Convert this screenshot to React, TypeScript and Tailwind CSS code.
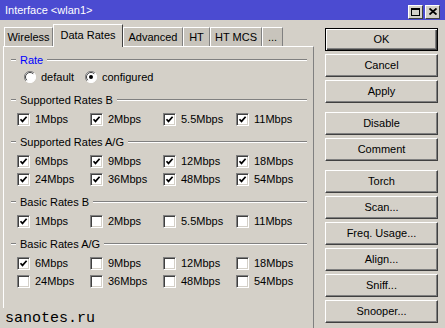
import React from "react";

const font = { fontFamily: '"Liberation Sans", Arial, sans-serif' };

function Check({ on }: { on: boolean }) {
  return (
    <div className="w-[13px] h-[13px] bg-white border border-t-[#808080] border-l-[#808080] border-r-white border-b-white shadow-[inset_1px_1px_0_#404040,inset_-1px_-1px_0_#d4d0c8] flex items-center justify-center">
      {on && (
        <svg width="9" height="9" viewBox="0 0 9 9">
          <path d="M1.5 4.2 L3.5 6.4 L7.6 1.8" fill="none" stroke="#000" strokeWidth="1.7" />
        </svg>
      )}
    </div>
  );
}

function Radio({ on }: { on: boolean }) {
  return (
    <svg width="12" height="12" viewBox="0 0 12 12">
      <circle cx="6" cy="6" r="5.5" fill="#fff" />
      <path d="M10 2 A5.5 5.5 0 0 0 2 10" fill="none" stroke="#808080" strokeWidth="1" />
      <path d="M9.2 2.8 A4.5 4.5 0 0 0 2.8 9.2" fill="none" stroke="#404040" strokeWidth="1" />
      <path d="M2 10 A5.5 5.5 0 0 0 10 2" fill="none" stroke="#fff" strokeWidth="1" />
      {on && <circle cx="6" cy="6" r="2" fill="#000" />}
    </svg>
  );
}

function Header({ title, blue }: { title: string; blue?: boolean }) {
  return (
    <div className="h-[14px] flex items-center pl-[7px] pr-[6px]">
      <div className="w-[5px] h-[2px] border-t border-t-[#808080] border-b border-b-white" />
      <span className={`px-[4px] text-[11px] leading-none ${blue ? "text-[#0000ff]" : "text-black"}`}>
        {title}
      </span>
      <div className="flex-1 h-[2px] border-t border-t-[#808080] border-b border-b-white" />
    </div>
  );
}

type Rate = [string, boolean];

function Rows({ rows }: { rows: Rate[][] }) {
  return (
    <div className="mt-[3px] flex flex-col">
      {rows.map((row, i) => (
        <div key={i} className="h-[18px] flex items-center pl-[13px]">
          {row.map(([label, on]) => (
            <div key={label} className="w-[73px] flex items-center gap-[5px]">
              <Check on={on} />
              <span className="text-[11px] leading-none">{label}</span>
            </div>
          ))}
        </div>
      ))}
    </div>
  );
}

const groups: { title: string; rows: Rate[][] }[] = [
  {
    title: "Supported Rates B",
    rows: [[["1Mbps", true], ["2Mbps", true], ["5.5Mbps", true], ["11Mbps", true]]],
  },
  {
    title: "Supported Rates A/G",
    rows: [
      [["6Mbps", true], ["9Mbps", true], ["12Mbps", true], ["18Mbps", true]],
      [["24Mbps", true], ["36Mbps", true], ["48Mbps", true], ["54Mbps", true]],
    ],
  },
  {
    title: "Basic Rates B",
    rows: [[["1Mbps", true], ["2Mbps", false], ["5.5Mbps", false], ["11Mbps", false]]],
  },
  {
    title: "Basic Rates A/G",
    rows: [
      [["6Mbps", true], ["9Mbps", false], ["12Mbps", false], ["18Mbps", false]],
      [["24Mbps", false], ["36Mbps", false], ["48Mbps", false], ["54Mbps", false]],
    ],
  },
];

const tabs = [
  { name: "Wireless", w: "w-[49px]" },
  { name: "Data Rates", w: "w-[70px]", active: true },
  { name: "Advanced", w: "w-[60px]" },
  { name: "HT", w: "w-[27px]" },
  { name: "HT MCS", w: "w-[52px]" },
  { name: "...", w: "w-[21px]" },
];

function Button({ label, def, extra }: { label: string; def?: boolean; extra?: string }) {
  return (
    <div
      className={`h-[23px] flex items-center justify-center text-[11px] leading-none text-black border ${
        def
          ? "border-black shadow-[inset_1px_1px_0_#fff,inset_-1px_-1px_0_#404040,inset_-2px_-2px_0_#808080]"
          : "border-t-white border-l-white border-r-[#404040] border-b-[#404040] shadow-[inset_-1px_-1px_0_#808080]"
      } ${extra ?? ""}`}
    >
      {label}
    </div>
  );
}

export default function App() {
  return (
    <div className="w-[445px] h-[328px] bg-[#d4d0c8] relative overflow-hidden text-black" style={font}>
      <div className="h-[20px] bg-[#4b4bd1] flex items-center pl-[5px] pr-[5px]">
        <span className="text-white text-[11px] leading-none flex-1">Interface &lt;wlan1&gt;</span>
        <div className="flex gap-[2px] mt-[3px]">
          <div className="w-[15px] h-[14px] bg-[#d4d0c8] border border-t-white border-l-white border-r-[#404040] border-b-[#404040] flex items-center justify-center">
            <div className="w-[9px] h-[8px] border border-black border-t-2" />
          </div>
          <div className="w-[15px] h-[14px] bg-[#d4d0c8] border border-t-white border-l-white border-r-[#404040] border-b-[#404040] flex items-center justify-center">
            <svg width="8" height="7" viewBox="0 0 8 7">
              <path d="M0.5 0.5 L7.5 6.5 M7.5 0.5 L0.5 6.5" stroke="#000" strokeWidth="1.8" />
            </svg>
          </div>
        </div>
      </div>

      <div className="flex pl-[3px]">
        <div className="w-[311px] flex flex-col">
          <div className="h-[26px] flex items-end pl-[1px]">
            {tabs.map((t) =>
              t.active ? (
                <div
                  key={t.name}
                  className={`${t.w} h-[23px] -mb-[1px] relative z-10 bg-[#d4d0c8] border-t border-l border-t-white border-l-white border-r border-r-[#404040] flex items-start justify-center pt-[5px] text-[11px] leading-none`}
                >
                  {t.name}
                </div>
              ) : (
                <div
                  key={t.name}
                  className={`${t.w} h-[19px] bg-[#c8c4bc] border-t border-l border-t-white border-l-white border-r border-r-[#808080] flex items-center justify-center text-[11px] leading-none`}
                >
                  {t.name}
                </div>
              )
            )}
          </div>
          <div className="h-[290px] border-t border-l border-t-white border-l-white border-r border-r-[#808080] pt-[6px]">
            <div className="flex flex-col">
              <Header title="Rate" blue />
              <div className="mt-[1px] h-[18px] flex items-center pl-[20px]">
                <div className="w-[61px] flex items-center gap-[5px]">
                  <Radio on={false} />
                  <span className="text-[11px] leading-none">default</span>
                </div>
                <div className="flex items-center gap-[5px]">
                  <Radio on />
                  <span className="text-[11px] leading-none">configured</span>
                </div>
              </div>
            </div>
            {groups.map((g) => (
              <div key={g.title} className="mt-[7px] flex flex-col">
                <Header title={g.title} />
                <Rows rows={g.rows} />
              </div>
            ))}
          </div>
        </div>

        <div className="ml-[11px] w-[113px] pt-[8px] flex flex-col gap-[3px]">
          <Button label="OK" def />
          <Button label="Cancel" />
          <Button label="Apply" />
          <Button label="Disable" extra="mt-[6px]" />
          <Button label="Comment" />
          <Button label="Torch" extra="mt-[6px]" />
          <Button label="Scan..." />
          <Button label="Freq. Usage..." />
          <Button label="Align..." />
          <Button label="Sniff..." />
          <Button label="Snooper..." />
        </div>
      </div>

      <div
        className="absolute left-0 bottom-0 h-[20px] pl-[5px] pr-[4px] bg-[#d4d0c8] flex items-center text-[15px] leading-none"
        style={{ fontFamily: '"Liberation Mono", "Courier New", monospace' }}
      >
        sanotes.ru
      </div>
    </div>
  );
}
